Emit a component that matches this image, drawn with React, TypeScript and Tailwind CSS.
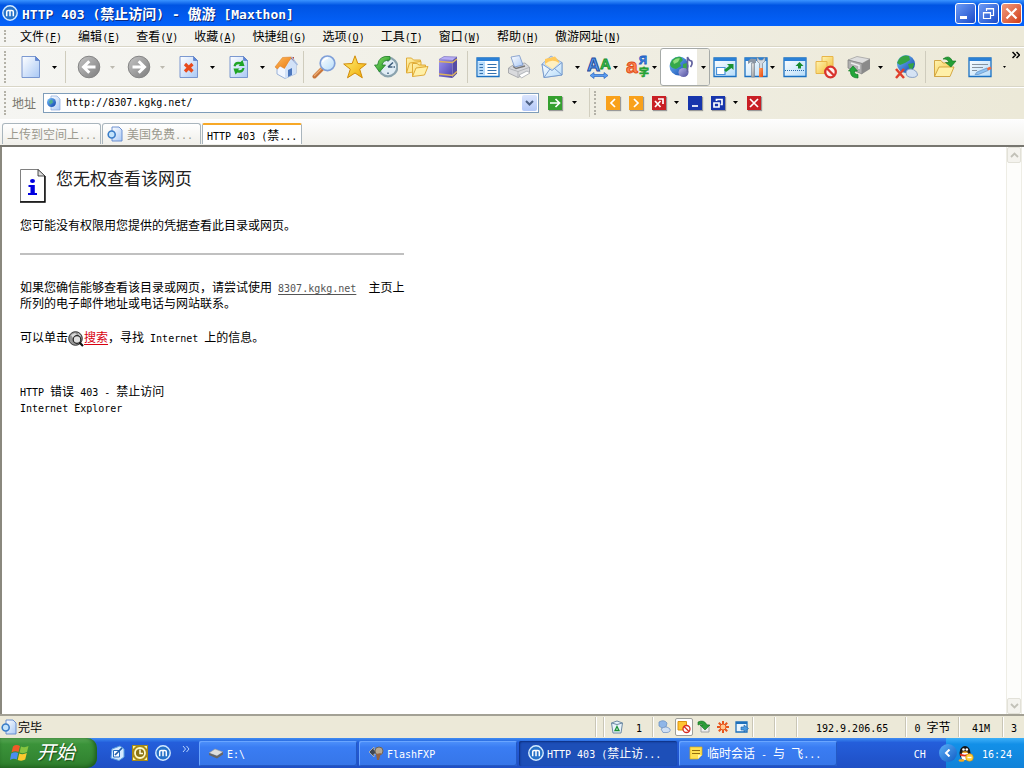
import type { ReactNode } from "react";

const cjk = "font-['Noto_Sans_CJK_SC',sans-serif]";
const mono = "font-['DejaVu_Sans_Mono','Noto_Sans_CJK_SC',monospace]";

// Half-width runs get the monospace face so they take half a CJK cell each
function Mixed({ text, latin = "text-[10px]" }: { text: string; latin?: string }) {
  const parts = text.split(/([\x20-\x7e]+)/).filter(Boolean);
  return (
    <span className="whitespace-pre">
      {parts.map((p, i) =>
        /^[\x20-\x7e]/.test(p) ? (
          <span key={i} className={`leading-none ${mono} ${latin}`}>{p}</span>
        ) : (
          <span key={i}>{p}</span>
        )
      )}
    </span>
  );
}

function Svg({ children, className = "size-6", box = "0 0 24 24" }: { children: ReactNode; className?: string; box?: string }) {
  return (
    <svg viewBox={box} className={`${className} shrink-0`} fill="none" aria-hidden="true">
      {children}
    </svg>
  );
}

function Gradients() {
  const list = [
    ["gPage", "#ffffff", "#a9c8f5"],
    ["gGray", "#c4c4c4", "#7d7d7d"],
    ["gStar", "#fff27a", "#f0a800"],
    ["gFolder", "#fff3b0", "#f3c344"],
    ["gGlobe", "#7cc4ff", "#0b3fa8"],
    ["gGreen", "#8be06a", "#118a1c"],
    ["gBook", "#9d92ee", "#4a41ab"],
    ["gWin", "#ffffff", "#b5dcfa"],
    ["gRoof", "#ffb95a", "#e97a12"],
    ["gMetal", "#f4f4f4", "#8d8d8d"],
    ["gOrange", "#ffa060", "#e8480e"],
    ["gNote", "#b4b4e8", "#4c4c9c"],
  ];
  return (
    <svg className="absolute size-0" aria-hidden="true">
      <defs>
        {list.map(([id, a, b]) => (
          <linearGradient key={id} id={id} x1="0" y1="0" x2="1" y2="1">
            <stop offset="0" stopColor={a} />
            <stop offset="1" stopColor={b} />
          </linearGradient>
        ))}
      </defs>
    </svg>
  );
}

const Maxthon = ({ className = "size-4" }: { className?: string }) => (
  <Svg className={className} box="0 0 16 16">
    <circle cx="8" cy="8" r="7.2" fill="#2672c8" stroke="#d4ebff" strokeWidth="1.4" />
    <path d="M4.700 11.200V6.800Q4.700 5.400 6.100 5.400H9.900Q11.300 5.400 11.300 6.800V11.200M8 5.400V11.200" stroke="#fff" strokeWidth="1.500" />
  </Svg>
);

const Sheet = () => (
  <path d="M3 1.500H16.500L20.500 5.500V22.500H3Z" fill="url(#gPage)" stroke="#6d8dcc" strokeWidth=".9" />
);
const Fold = () => <path d="M16.500 1.500V5.500H20.500Z" fill="#5e86d8" stroke="#5d7fc4" strokeWidth=".7" />;

const NewPage = () => <Svg><Sheet /><Fold /></Svg>;
const Back = () => (
  <Svg>
    <circle cx="12" cy="12" r="10.800" fill="url(#gGray)" stroke="#858585" />
    <path d="M18.500 12H7M12.300 6.200L6.500 12L12.300 17.800" stroke="#fff" strokeWidth="3" />
  </Svg>
);
const Forward = () => (
  <Svg>
    <circle cx="12" cy="12" r="10.800" fill="url(#gGray)" stroke="#858585" />
    <path d="M5.500 12H17M11.700 6.200L17.500 12L11.700 17.800" stroke="#fff" strokeWidth="3" />
  </Svg>
);
const Stop = () => (
  <Svg><Sheet /><Fold /><path d="M8 9L15.500 16.500M15.500 9L8 16.500" stroke="#e84a1c" strokeWidth="3.200" /></Svg>
);
const Refresh = () => (
  <Svg>
    <Sheet /><Fold />
    <path d="M6.500 11Q7.500 5.500 13.500 7L15.500 5L17.500 11L11.500 11L13 9.500Q9.500 8.500 8.500 11.500ZM17.500 13Q16.500 19 10.500 17.500L8.500 19.500L6.500 13.500L12.500 13.500L11 15Q14.500 16 15.500 13Z" fill="#1fa526" />
  </Svg>
);
const Home = () => (
  <Svg>
    <path d="M17 2H20V9H17Z" fill="#c7482e" />
    <path d="M3 12V19L11 23.500L22 18.500V9L17 4Z" fill="#f2f7ff" stroke="#9ab2d8" />
    <path d="M11 14V23.500L22 18.500V9L17 4Z" fill="#d2e2f8" />
    <path d="M1 12L8.500 2.500L17.500 2L10.500 13.500L6 11L3.500 14Z" fill="url(#gRoof)" stroke="#d9771c" strokeWidth=".5" />
    <path d="M17.500 2L23.500 10" stroke="#a5bbe0" strokeWidth="1.400" />
    <path d="M14 15L18 13V20L14 22Z" fill="#4d78bd" />
  </Svg>
);
const Search = () => (
  <Svg>
    <path d="M10 14L2.500 21.500" stroke="#c8763b" strokeWidth="4" strokeLinecap="round" />
    <path d="M10 13L2.500 20.500" stroke="#efae72" strokeWidth="1.300" strokeLinecap="round" />
    <circle cx="15.500" cy="8.300" r="7.300" fill="url(#gWin)" stroke="#7f9fd8" strokeWidth="1.700" />
    <path d="M10.500 7Q12 3.500 16 3.300" stroke="#fff" strokeWidth="1.600" />
  </Svg>
);
const Star = () => (
  <Svg>
    <path d="M12 .800L14.800 8.500L23.300 9L16.700 14.200L19.300 22.800L12 18L4.500 22.800L7.300 14.200L.700 9L9.200 8.500Z" fill="url(#gStar)" stroke="#d18b09" />
  </Svg>
);
const History = () => (
  <Svg>
    <circle cx="14" cy="12" r="9.300" fill="#e0ecf4" stroke="#8ba3ae" strokeWidth="2.200" />
    <path d="M14 12L19 7.500M14 12H18.500M14 5V6.500M21 12H19.500M14 19V17.500" stroke="#3c5c7a" strokeWidth="1.500" />
    <path d="M16 1.500Q5 0 3.500 10H.500L5.500 17L11.500 10H8Q9 5 16 5Z" fill="url(#gGreen)" stroke="#227e2b" strokeWidth=".8" />
  </Svg>
);
const Folders = () => (
  <Svg>
    <path d="M1.500 17.500V3H6.500L8.500 5H15.500V10" fill="url(#gFolder)" stroke="#dca52c" strokeWidth=".9" />
    <path d="M1.500 18L4.500 8L16 6.500V16Z" fill="#ffe995" stroke="#dca52c" strokeWidth=".9" />
    <path d="M7.500 21.500V8.500H12L14 10H20.500V13" fill="url(#gFolder)" stroke="#dca52c" strokeWidth=".9" />
    <path d="M7.500 21.500L11 13L23 11.500L19.500 20Z" fill="#fff0a8" stroke="#dca52c" strokeWidth=".9" />
  </Svg>
);
const Book = () => (
  <Svg>
    <path d="M3 4.500L8 1.500L21 2L16.500 5.500Z" fill="#b7adf4" stroke="#7068b8" strokeWidth=".6" />
    <path d="M3 4.500L16.500 5.500V23L3 21.500Z" fill="url(#gBook)" />
    <path d="M16.500 5.500L21 2V18.500L16.500 23Z" fill="#544ba4" />
    <path d="M3 6.500L16.500 7.500L21 4M3 19L16.500 20.500L21 16.500" stroke="#ddb35c" strokeWidth="1.500" />
  </Svg>
);
const SidePanel = () => (
  <Svg>
    <path d="M1 3H23V21.500H1Z" fill="#fff" stroke="#1a70c2" strokeWidth="1.300" />
    <path d="M1 3H23V6H1Z" fill="#2a80d6" />
    <path d="M2 6.500H9V21H2Z" fill="#b9dcfa" />
    <path d="M3.500 9.500H7M3.500 12.500H7M3.500 15.500H7M3.500 18.500H7M11.500 9.500H20.500M11.500 12.500H20.500M11.500 15.500H20.500M11.500 18.500H20.500" stroke="#3471ae" strokeWidth="1.200" />
  </Svg>
);
const Printer = () => (
  <Svg>
    <path d="M1.500 13L7 9.500L18 8L22.500 12V17L11 22.500L1.500 18Z" fill="#d9dadd" stroke="#9b9da2" strokeWidth=".8" />
    <path d="M4 2L12.500 .500L16 10L7.500 12Z" fill="url(#gPage)" stroke="#7593c8" strokeWidth=".8" />
    <path d="M2 13.500L11 16.500L22 12.500M11 16.500V22.500" stroke="#aaacb0" strokeWidth=".8" />
    <path d="M6 11.500L9 13.500L18 11" stroke="#777" strokeWidth="1.300" />
    <path d="M12 20L20 16L23 18L14.500 23Z" fill="#fff" stroke="#9a9da5" strokeWidth=".7" />
  </Svg>
);
const Mail = () => (
  <Svg>
    <path d="M2 9L11 1L22 7.500V20L4 22.500Z" fill="#c5def8" stroke="#84a4d2" strokeWidth=".8" />
    <path d="M5 4L15 1.500L19.500 7L12.500 14L5 9.500Z" fill="#ffc95c" />
    <path d="M5 9Q12 3 19 8L12.500 14Z" fill="#fff0c0" />
    <path d="M2 9L12 15.500L22 7.500V20L4 22.500Z" fill="url(#gWin)" stroke="#7396ca" strokeWidth=".9" />
    <path d="M4 22.500L10 14M22 20L14.500 13.500" stroke="#7396ca" strokeWidth=".9" />
  </Svg>
);
const FontSize = () => (
  <Svg>
    <text x="13" y="14" fontSize="15" fontWeight="700" fontFamily="Liberation Sans, sans-serif" fill="#3cc048" stroke="#168a34" strokeWidth=".8">A</text>
    <text x="0" y="16" fontSize="18" fontWeight="700" fontFamily="Liberation Sans, sans-serif" fill="#5a9cf0" stroke="#1c4c9c" strokeWidth="1">A</text>
    <path d="M3 20.500L7 17.500V19.500H17V17.500L21 20.500L17 23.500V21.500H7V23.500Z" fill="#5a9cf0" stroke="#2a66c0" strokeWidth=".7" />
  </Svg>
);
const Encoding = () => (
  <Svg>
    <text x="13" y="9" fontSize="11" fontWeight="700" fontFamily="Liberation Sans, sans-serif" fill="#4a94f0" stroke="#1c5cc0" strokeWidth=".8">Я</text>
    <text x="0" y="18" fontSize="21" fontWeight="700" fontFamily="Liberation Sans, sans-serif" fill="#ff8454" stroke="#e04c14" strokeWidth=".9">a</text>
    <text x="13" y="21" fontSize="10" fontWeight="700" fontFamily="Noto Sans CJK SC, sans-serif" fill="#2cac3c" stroke="#1d9a2c" strokeWidth=".6">字</text>
  </Svg>
);
const GlobeNote = () => (
  <Svg>
    <circle cx="10" cy="11" r="9.500" fill="url(#gGlobe)" />
    <path d="M3 5Q7 1 12 2L14 5L11 8L12 11L7 14Q1 13 1 9Z" fill="#35a84a" />
    <path d="M4 6Q7 2.500 11 3.500L9 7L5 9Z" fill="#8ede7e" />
    <path d="M14 9L18 8V14L14 15Z" fill="#3ca94a" />
    <ellipse cx="14.500" cy="17.500" rx="5" ry="4.500" fill="url(#gNote)" />
    <path d="M18.500 17V2Q20 6 22.500 6Q24 9 21.500 12" stroke="#62629f" strokeWidth="1.700" />
  </Svg>
);
const WinBase = () => (
  <>
    <path d="M1 3H23V21.500H1Z" fill="url(#gWin)" stroke="#1a70c2" strokeWidth="1.300" />
    <path d="M1 3H23V6H1Z" fill="#2a80d6" />
  </>
);
const FullScreen = () => (
  <Svg>
    <WinBase />
    <path d="M3.500 12.500H12V19.500H3.500Z" fill="#fff" stroke="#4a92d8" strokeWidth="1.200" />
    <path d="M11 15L16 11L14 9H20.500V15L18.500 13L13 17Z" fill="#189234" />
  </Svg>
);
const Tools = () => (
  <Svg>
    <WinBase />
    <path d="M4 6L7 3.500L12 4V8H9L7 7L4 9Z" fill="#8a96a5" />
    <path d="M7.500 8H10.500V22H7.500Z" fill="url(#gMetal)" stroke="#7c8794" strokeWidth=".7" />
    <path d="M13 2V6L15.500 8.500V14H18.500V8.500L21 6V2L18.500 5H15.500Z" fill="#d5dae1" stroke="#7c8794" strokeWidth=".7" />
    <path d="M15 13H19V22H15Z" fill="url(#gOrange)" />
  </Svg>
);
const PanelUp = () => (
  <Svg>
    <WinBase />
    <path d="M2 15.500H22" stroke="#2869a8" strokeDasharray="1 1" />
    <path d="M12.500 11L16.500 7L20.500 11H18V13.500H15V11Z" fill="#168a2d" />
  </Svg>
);
const AdBlock = () => (
  <Svg>
    <path d="M8 1.500H19V13H8Z" fill="url(#gFolder)" stroke="#e8b548" />
    <path d="M2 6.500H13V18.500H2Z" fill="url(#gFolder)" stroke="#e8b548" />
    <circle cx="16.500" cy="17" r="5.300" fill="#fff0ee" stroke="#d8342e" strokeWidth="2.300" />
    <path d="M13 13.500L20 20.500" stroke="#d8342e" strokeWidth="2.300" />
  </Svg>
);
const Drive = () => (
  <Svg>
    <path d="M1 5L10 1.500L23 4L15 8.500Z" fill="#dedede" stroke="#999" strokeWidth=".7" />
    <path d="M1 5L15 8.500V19L1 13Z" fill="#b0b0b0" stroke="#7c7c7c" strokeWidth=".7" />
    <path d="M15 8.500L23 4V14L15 19Z" fill="#8a8a8a" />
    <path d="M4 8L12 10.500V14" stroke="#ededed" strokeWidth="1.500" />
    <path d="M11 23Q3 23 3.500 16H1.500L6 11L10.500 16H7.500Q7 19.500 11 19.500Z" fill="#24a63a" stroke="#0f7a22" strokeWidth=".7" />
  </Svg>
);
const Offline = () => (
  <Svg>
    <circle cx="12" cy="9" r="9" fill="url(#gGlobe)" />
    <path d="M5 4Q9 -1 15 1L16 5L11 8L6 10L3 8ZM14 9L20 8Q20 13 16 16Z" fill="#35a344" />
    <path d="M2 14L10 23M10 14L2 23" stroke="#e0402c" strokeWidth="2.500" />
    <path d="M12 18Q12 14 17 14Q23 15 23.500 20Q22 23.500 15 22Q12 21 12 18Z" fill="#d5e3f4" stroke="#7f9ac2" strokeWidth=".9" />
  </Svg>
);
const OpenFolder = () => (
  <Svg>
    <path d="M1.500 21.500V5.500H8L10 8H17V12" fill="url(#gFolder)" stroke="#cf9f38" strokeWidth=".9" />
    <path d="M1.500 21.500L6 12H21L17 21.500Z" fill="#fff0a8" stroke="#cf9f38" strokeWidth=".9" />
    <path d="M10 4Q16 -1 19.500 6H23L18 12L12.500 7.500H16Q14.500 3.500 10 4Z" fill="#239f36" stroke="#11711e" strokeWidth=".6" />
  </Svg>
);
const EditPage = () => (
  <Svg>
    <WinBase />
    <path d="M4 9.500H20M4 12.500H15M4 15.500H9" stroke="#7a8794" strokeWidth=".9" />
    <path d="M9 17L19 13L20 15.500L10.500 19.500L7 19.500Z" fill="#8cc1f2" stroke="#5b86b8" strokeWidth=".6" />
    <path d="M19 13L22.500 11.500L23.500 14L20 15.500Z" fill="#ef6a3e" />
  </Svg>
);
const IePage = () => (
  <Svg className="size-4" box="0 0 16 16">
    <path d="M5 1H12L15 4V15H5Z" fill="url(#gPage)" stroke="#5f86cc" strokeWidth=".9" />
    <circle cx="4.700" cy="8.500" r="3.500" fill="#c4e4fc" stroke="#3a7cc8" strokeWidth="1.600" />
  </Svg>
);

function Caret({ faded = false }: { faded?: boolean }) {
  return (
    <Svg className="h-[3px] w-[5px]" box="0 0 5 3">
      <path d="M0 0H5L2.500 3Z" fill={faded ? "#bdbab0" : "#000"} />
    </Svg>
  );
}

function Tool({ label, icon, width = "w-6", drop, faded }: { label: string; icon: ReactNode; width?: string; drop?: string; faded?: boolean }) {
  return (
    <div className="flex h-8 shrink-0 items-center">
      <button aria-label={label} title={label} className={`flex h-full items-center justify-center ${width}`}>{icon}</button>
      {drop && (
        <button aria-label={`${label} ▾`} className={`flex h-full items-center justify-center ${drop}`}>
          <Caret faded={faded} />
        </button>
      )}
    </div>
  );
}

function Grip({ height }: { height: string }) {
  return <div className={`mx-1 w-0 shrink-0 border-l-2 border-dotted border-[#b4b2a8] ${height}`} />;
}
const Rule = () => <div className="mx-1 h-8 w-px shrink-0 bg-[#cfccbd]" />;

const menus: [string, string][] = [
  ["文件", "F"], ["编辑", "E"], ["查看", "V"], ["收藏", "A"], ["快捷组", "G"],
  ["选项", "O"], ["工具", "T"], ["窗口", "W"], ["帮助", "H"], ["傲游网址", "N"],
];

function TitleBar() {
  const base = "flex size-[21px] items-center justify-center rounded-[3px] border border-white";
  return (
    <header className="flex h-[26px] shrink-0 items-center bg-linear-to-b from-[#3a93ff] via-[#0054e3] via-20% to-[#0462fb] pr-0.5 pl-0.5">
      <Maxthon />
      <h1 className="ml-1 flex-1 text-[14px] leading-[18px] font-bold text-white [text-shadow:1px_1px_0_#0a2a80]">
        <Mixed text="HTTP 403 (禁止访问) - 傲游 [Maxthon]" latin="text-[13px]" />
      </h1>
      <div className="flex gap-0.5">
        <button aria-label="最小化" className={`${base} bg-linear-to-br from-[#6d9bf5] to-[#1b49c8]`}>
          <Svg className="size-[19px]" box="0 0 19 19"><path d="M4 12H11V15H4Z" fill="#fff" /></Svg>
        </button>
        <button aria-label="还原" className={`${base} bg-linear-to-br from-[#6d9bf5] to-[#1b49c8]`}>
          <Svg className="size-[19px]" box="0 0 19 19">
            <path d="M7.500 7V4.500H14.500V11.500H12M7 5H15M4.500 8.500H11.500V14.500H4.500ZM4 9H12" stroke="#fff" strokeWidth="1.200" />
          </Svg>
        </button>
        <button aria-label="关闭" className={`${base} bg-linear-to-br from-[#f09a7c] to-[#d03a10]`}>
          <Svg className="size-[19px]" box="0 0 19 19"><path d="M4.500 4.500L14.500 14.500M14.500 4.500L4.500 14.500" stroke="#fff" strokeWidth="2.200" /></Svg>
        </button>
      </div>
    </header>
  );
}

function MenuBar() {
  return (
    <nav className="flex h-[21px] shrink-0 items-center border-b border-[#d9d6c7]">
      <Grip height="h-3" />
      <div className="flex pl-0.5">
        {menus.map(([name, key]) => (
          <button key={key} className="shrink-0 px-2 text-[12px] leading-4">
            {name}
            <span className={`leading-none ${mono} text-[10px]`}>(<u>{key}</u>)</span>
          </button>
        ))}
      </div>
    </nav>
  );
}

function MainToolbar() {
  const wide = "w-[31px]";
  return (
    <div className="flex h-10 shrink-0 items-center overflow-hidden border-t border-b border-t-white border-b-[#d9d6c7]">
      <Grip height="h-8" />
      <div className="flex pl-[5px]">
        <Tool label="新建" icon={<NewPage />} width="w-8" drop="w-[14px]" />
      </div>
      <Rule />
      <div className="flex gap-1 pl-[3px]">
        <Tool label="后退" icon={<Back />} width="w-8" drop="w-[14px]" faded />
        <Tool label="前进" icon={<Forward />} width="w-8" drop="w-[14px]" faded />
        <Tool label="停止" icon={<Stop />} width="w-8" drop="w-[14px]" />
        <Tool label="刷新" icon={<Refresh />} width="w-8" drop="w-[14px]" />
        <Tool label="主页" icon={<Home />} width="w-[26px]" />
      </div>
      <Rule />
      <Tool label="搜索" icon={<Search />} width={wide} />
      <Tool label="收藏" icon={<Star />} width={wide} />
      <Tool label="历史" icon={<History />} width={wide} />
      <Tool label="文件夹" icon={<Folders />} width={wide} />
      <Tool label="资源" icon={<Book />} width={wide} />
      <Rule />
      <Tool label="侧边栏" icon={<SidePanel />} width={wide} />
      <Tool label="打印" icon={<Printer />} width={wide} />
      <Tool label="邮件" icon={<Mail />} width="w-9" drop="w-[14px]" />
      <div className="flex gap-[7px] pr-0.5 pl-[3px]">
        <Tool label="字体大小" icon={<FontSize />} drop="w-2" />
        <Tool label="编码" icon={<Encoding />} drop="w-2" />
      </div>
      <div className="flex h-[38px] w-[50px] shrink-0 overflow-hidden rounded-[3px] border border-[#a6aaa8] bg-white">
        <button aria-label="多媒体" className="flex flex-1 items-center justify-center pl-1"><GlobeNote /></button>
        <button aria-label="多媒体 ▾" className="flex w-3 items-center justify-center bg-[#eceadf]"><Caret /></button>
      </div>
      <div className="flex items-center gap-[7px] pl-[3px]">
        <Tool label="全屏" icon={<FullScreen />} />
        <Tool label="工具" icon={<Tools />} drop="w-2" />
        <Tool label="收起" icon={<PanelUp />} />
        <Tool label="过滤" icon={<AdBlock />} />
        <Tool label="代理" icon={<Drive />} width="w-7" drop="w-[14px]" />
        <Tool label="脱机" icon={<Offline />} />
        <div className="h-8 w-px bg-[#cfccbd]" />
        <Tool label="打开" icon={<OpenFolder />} />
        <Tool label="编辑" icon={<EditPage />} width="w-8" />
        <button aria-label="编辑 ▾">
          <Svg className="h-0.5 w-[3px]" box="0 0 3 2"><path d="M0 0H3L1.500 2Z" fill="#000" /></Svg>
        </button>
      </div>
      <button aria-label="更多" className="mr-1 ml-auto self-start pt-[3px]">
        <Svg className="h-2 w-2" box="0 0 8 8"><path d="M.500 1L3.500 4L.500 7M4.500 1L7.500 4L4.500 7" stroke="#000" strokeWidth="1.500" /></Svg>
      </button>
    </div>
  );
}

function Square({ label, color, d }: { label: string; color: string; d: string }) {
  return (
    <button aria-label={label} className={`flex size-[14px] shrink-0 items-center justify-center shadow-[1px_1px_1px_#999] ${color}`}>
      <Svg className="size-[14px]" box="0 0 14 14"><path d={d} stroke="#fff" strokeWidth="1.700" /></Svg>
    </button>
  );
}

function AddressBar() {
  return (
    <div className="flex h-8 shrink-0 items-center border-t border-white pb-0.5">
      <form className="flex h-full w-[590px] items-center border-r border-[#d2cfc0]" onSubmit={(e) => e.preventDefault()}>
        <Grip height="h-6" />
        <label htmlFor="url" className="ml-0.5 text-[12px] leading-4 text-[#77756b]">地址</label>
        <div className="ml-[7px] flex h-5 flex-1 items-center border border-[#7f9db9] bg-white">
          <div className="ml-0.5">
            <Svg className="size-4" box="0 0 16 16">
              <path d="M5 1H11L14 4V15H5Z" fill="url(#gPage)" stroke="#88a7dd" strokeWidth=".7" />
              <circle cx="5.500" cy="7.500" r="4.500" fill="url(#gGlobe)" />
              <path d="M3 6L6 4.500L7 7.500L4 9.500Z" fill="#4fae8e" />
            </Svg>
          </div>
          <input id="url" type="text" defaultValue="http://8307.kgkg.net/" className={`ml-1 h-4 min-w-0 flex-1 text-[10px] outline-none ${mono}`} />
          <button type="button" aria-label="历史地址" className="mr-px flex h-4 w-[15px] items-center justify-center rounded-[2px] bg-linear-to-b from-[#dbe5fd] to-[#b3c8f8]">
            <Svg className="h-[6px] w-[9px]" box="0 0 9 6"><path d="M1 1L4.500 4.500L8 1" stroke="#4d6185" strokeWidth="2" /></Svg>
          </button>
        </div>
        <div className="mr-3 ml-[9px] flex items-center gap-[10px]">
          <Square label="转到" color="bg-[#35a02f]" d="M2 7H11M7.500 3L11.500 7L7.500 11" />
          <Caret />
        </div>
      </form>
      <Grip height="h-6" />
      <div className="flex items-center gap-[9px] pl-1.5">
        <Square label="上一个" color="bg-[#f9a11b]" d="M9 3L5 7L9 11" />
        <Square label="下一个" color="bg-[#f9a11b]" d="M5 3L9 7L5 11" />
        <div className="flex items-center gap-2">
          <Square label="关闭全部" color="bg-[#c91f25]" d="M3 5L8.500 11M8.500 5L3 11M6 3H11V8" />
          <Caret />
        </div>
        <Square label="最小化" color="bg-[#1735ac]" d="M4 10H10" />
        <div className="flex items-center gap-2">
          <Square label="还原" color="bg-[#1735ac]" d="M5.500 5V3.500H11V8.500H9.500M3 7H8V11H3Z" />
          <Caret />
        </div>
        <Square label="关闭" color="bg-[#c91f25]" d="M3 3L11 11M11 3L3 11" />
      </div>
    </div>
  );
}

function TabBar() {
  const idle = "flex h-[21px] w-[99px] items-center rounded-t-[3px] border border-b-0 border-[#a9b5bd] bg-linear-to-b from-white to-[#f0efea] pl-1 text-[12px] leading-4 text-[#9b998e]";
  return (
    <div className="flex h-7 shrink-0 items-start gap-px border-t border-b-2 border-t-white border-b-[#77766f] bg-linear-to-b from-[#fdfdfd] to-[#f1f0eb] pt-[3px] pl-0.5">
      <button className={idle}><Mixed text="上传到空间上..." /></button>
      <button className={idle}>
        <IePage />
        <span className="ml-1"><Mixed text="美国免费..." /></span>
      </button>
      <button className="flex h-[21px] w-[100px] items-center rounded-t-[2px] border border-t-2 border-b-0 border-[#a9b5bd] border-t-[#f7a826] bg-white pl-1 text-[12px] leading-4">
        <Mixed text="HTTP 403 (禁..." />
      </button>
    </div>
  );
}

function ErrorPage() {
  return (
    <main className="flex min-h-0 flex-1 border-l-2 border-[#8a887e] bg-white">
      <article className="flex-1 pt-[19px] pl-[18px] text-[12px] leading-4">
        <div className="flex items-start">
          <Svg className="mt-[3px] h-[34px] w-[26px]" box="0 0 26 34">
            <path d="M.500 .500H18L24.500 7V32.500H.500Z" fill="#fff" stroke="#808080" />
            <path d="M0 33H25V7" stroke="#000" strokeWidth="1.400" />
            <path d="M18 .500V7H25Z" fill="#ddd" stroke="#222" strokeWidth=".8" />
            <ellipse cx="12.500" cy="12" rx="2.500" ry="2" fill="#0000e0" />
            <path d="M8.500 16H14.800V24H17V26H8V24H10.500V18H8.500Z" fill="#0000e0" />
          </Svg>
          <h2 className="ml-[10px] text-[17px] leading-6 font-normal text-[#222]">您无权查看该网页</h2>
        </div>
        <p className="mt-[14px]">您可能没有权限用您提供的凭据查看此目录或网页。</p>
        <hr className="mt-5 w-96 border-t-2 border-[#c0c0c0]" />
        <p className="mt-6">
          <Mixed text="如果您确信能够查看该目录或网页，请尝试使用 " />
          <a href="#home" className="text-[#555] underline underline-offset-2"><Mixed text="8307.kgkg.net" /></a>
          <Mixed text="  主页上" />
          <br />
          所列的电子邮件地址或电话与网站联系。
        </p>
        <p className="mt-[18px] flex h-4 items-center">
          可以单击
          <Svg className="mt-1 size-4" box="0 0 16 16">
            <circle cx="7.500" cy="7.500" r="6.800" fill="#969696" stroke="#333" />
            <path d="M3 4L7 2L9 4L5 7ZM10 2L13 5L11 6Z" fill="#ddd" />
            <circle cx="9" cy="8.500" r="3.800" fill="#e1e1e1" stroke="#222" strokeWidth="1.200" />
            <path d="M11.500 11.500L15 15" stroke="#111" strokeWidth="2.200" />
          </Svg>
          <a href="#search" className="text-[#d80010] underline underline-offset-2">搜索</a>
          <Mixed text="，寻找 Internet 上的信息。" />
        </p>
        <p className="mt-[38px]">
          <Mixed text="HTTP 错误 403 - 禁止访问" />
          <br />
          <Mixed text="Internet Explorer" />
        </p>
      </article>
      <div className="mr-0.5 flex w-4 flex-col justify-between border-x border-[#eeede5] bg-[#fdfdfb]">
        <ScrollButton label="向上滚动" d="M1 5L4.500 1.500L8 5" />
        <ScrollButton label="向下滚动" d="M1 1L4.500 4.500L8 1" />
      </div>
    </main>
  );
}

function ScrollButton({ label, d }: { label: string; d: string }) {
  return (
    <button aria-label={label} className="flex h-4 w-full items-center justify-center rounded-[2px] border border-[#e2e1d8] bg-[#f4f3ee]">
      <Svg className="h-[6px] w-[9px]" box="0 0 9 6"><path d={d} stroke="#c2c1b8" strokeWidth="1.800" /></Svg>
    </button>
  );
}

const Divider = () => <div className="h-5 w-0.5 border-r border-l border-r-white border-l-[#c9c6b6]" />;

function StatusBar() {
  return (
    <footer className="flex h-6 shrink-0 items-center border-t-2 border-[#a3a195] bg-[#ece9d8] text-[12px] leading-4">
      <div className="ml-px"><IePage /></div>
      <span className="ml-px flex-1">完毕</span>
      <Divider />
      <div className="w-1.5" />
      <Divider />
      <div className="flex w-[47px] items-center gap-3 pl-[5px]">
        <Svg className="size-[14px]" box="0 0 14 14">
          <path d="M1.500 3L7 1L12.500 3L11 13H3Z" fill="#e8f3fb" stroke="#6e8aa4" />
          <path d="M1.500 3L7 4.500L12.500 3" stroke="#6e8aa4" />
          <path d="M7 6.500L9 10.500H5Z" stroke="#1b9236" strokeWidth="1.300" />
        </Svg>
        <Mixed text="1" />
      </div>
      <Divider />
      <div className="flex w-[98px] items-center gap-[3px] pl-0.5">
        <Svg className="size-4" box="0 0 16 16">
          <path d="M3 3Q8 0 11 4L10 8L6 9L3 7Z" fill="#8fb6e8" stroke="#6b92c4" strokeWidth=".8" />
          <path d="M5 10Q10 6 14 10Q15 13 11 13.500H7Z" fill="#cfe0f5" stroke="#7596c4" strokeWidth=".8" />
        </Svg>
        <button aria-label="过滤" className="flex h-[18px] w-[18px] items-center justify-center rounded-[2px] border border-[#9d9f99] bg-white">
          <Svg className="size-[14px]" box="0 0 14 14">
            <path d="M1 1.500H9.500V10H1Z" fill="#ffc431" stroke="#dc9310" />
            <circle cx="9.500" cy="9" r="3.500" fill="#fff" stroke="#d72d22" strokeWidth="1.300" />
            <path d="M7 6.500L12 11.500" stroke="#d72d22" strokeWidth="1.300" />
          </Svg>
        </button>
        <Svg className="size-4" box="0 0 16 16">
          <path d="M5 6H13V13H5Z" fill="#eee" stroke="#a2a2a2" />
          <path d="M2 3Q8 0 11 6H14L9 11L4 6H7Q6 4 2 6Z" fill="#2b9c38" stroke="#14701f" strokeWidth=".6" />
        </Svg>
        <Svg className="size-4" box="0 0 16 16">
          <path d="M8 2V14M2 8H14M3.800 3.800L12.200 12.200M12.200 3.800L3.800 12.200" stroke="#e8561c" strokeWidth="2" />
          <circle cx="8" cy="8" r="3" fill="#ffc890" stroke="#e8561c" />
        </Svg>
        <Svg className="size-4" box="0 0 16 16">
          <path d="M2 3H13V13H2Z" fill="#e8f5ff" stroke="#1d70bb" strokeWidth="1.300" />
          <path d="M2 3H13V5H2Z" fill="#1d70bb" />
          <path d="M7 8H10V6L14.500 9.500L10 13V11H7Z" fill="#4a9ae0" stroke="#1d5fa5" strokeWidth=".6" />
        </Svg>
      </div>
      <Divider />
      <div className="w-5" />
      <Divider />
      <div className="w-5" />
      <Divider />
      <div className="w-[107px] pl-[18px]"><Mixed text="192.9.206.65" /></div>
      <Divider />
      <div className="w-[51px] text-center"><Mixed text="0 字节" /></div>
      <Divider />
      <div className="w-[42px] text-center"><Mixed text="41M" /></div>
      <Divider />
      <div className="w-5 text-center"><Mixed text="3" /></div>
    </footer>
  );
}

function Task({ icon, text, active }: { icon: ReactNode; text: string; active?: boolean }) {
  return (
    <button
      className={`flex h-[25px] w-[158px] items-center gap-[3px] rounded-[2px] pl-[9px] text-left text-[12px] leading-4 text-white ${
        active ? "bg-[#1d4fb8] shadow-[inset_1px_1px_2px_#0c2f80]" : "bg-linear-to-b from-[#4f92fb] via-[#3a7df3] via-25% to-[#3675e8] shadow-[inset_1px_1px_0_#69a5ff,inset_-1px_-1px_0_#2459c4]"
      }`}
    >
      {icon}
      <Mixed text={text} />
    </button>
  );
}

function Taskbar() {
  return (
    <div className="flex h-[30px] shrink-0 items-center bg-linear-to-b from-[#3f8cf3] via-[#245edb] via-15% to-[#1f4fc4]">
      <button className="flex h-full w-[97px] items-center gap-[7px] rounded-r-[10px] bg-linear-to-b from-[#5bab58] via-[#3b933a] via-20% to-[#2f7f2d] pl-[10px] shadow-[inset_-2px_-1px_4px_#1c5a1b]">
        <Svg className="size-5" box="0 0 20 20">
          <path d="M3 3.500Q6 1 10 3L8.500 9Q5 7.500 1.500 9.500Z" fill="#f05a28" />
          <path d="M11 3.500Q14.500 5 18.500 3L17 9Q13.500 11 9.500 9.500Z" fill="#85c440" />
          <path d="M1.200 10.500Q5 8.500 8.200 10L6.800 16.500Q3.500 15 0 17Z" fill="#4a8df0" />
          <path d="M9.200 10.500Q13 12 16.800 10L15.200 16.500Q12 18.500 7.700 17Z" fill="#fbc92e" />
        </Svg>
        <span className="pb-1 text-[19px] leading-6 text-white italic [text-shadow:1px_1px_1px_#1c4d1b]">开始</span>
      </button>
      <div className="flex w-[102px] items-center gap-[7px] pl-3">
        <button aria-label="显示桌面">
          <Svg className="size-4" box="0 0 16 16">
            <path d="M3 4L11 1L15 4V12L10 15.500L2 13Z" fill="#d4e9ff" stroke="#5fa1df" />
            <path d="M4.500 5.500H10.500V12H4.500Z" fill="#fff" stroke="#246dbd" />
            <path d="M6 10L13 3" stroke="#1e5da8" strokeWidth="1.700" />
          </Svg>
        </button>
        <button aria-label="时钟">
          <Svg className="size-4" box="0 0 16 16">
            <path d="M0 0H16V16H0Z" fill="#a88a16" />
            <circle cx="8" cy="8" r="5" fill="#8c7414" stroke="#fffbc8" strokeWidth="1.800" />
            <path d="M8 4.500V8.500H11" stroke="#fffbe0" strokeWidth="1.500" />
            <path d="M1 1H4L1 4ZM15 1H12L15 4ZM1 15H4L1 12ZM15 15H12L15 12Z" fill="#fff49a" />
          </Svg>
        </button>
        <button aria-label="傲游"><Maxthon /></button>
        <button aria-label="更多快捷方式" className="mb-2 ml-1">
          <Svg className="size-2" box="0 0 8 8"><path d="M1 1L3.500 4L1 7M4.500 1L7 4L4.500 7" stroke="#b6d3ff" /></Svg>
        </button>
      </div>
      <div className="flex flex-1 gap-0.5">
        <Task
          text="E:\"
          icon={<Svg className="size-4" box="0 0 16 16"><path d="M1 8L7 4L15 7L9 11Z" fill="#ddd" stroke="#999" strokeWidth=".6" /><path d="M1 8L9 11V13.500L1 10ZM9 11L15 7V9.500L9 13.500Z" fill="#666" /></Svg>}
        />
        <Task
          text="FlashFXP"
          icon={<Svg className="size-4" box="0 0 16 16"><path d="M1 7L6 2V5H10V9H6V12Z" fill="#3e4753" stroke="#bbb" strokeWidth=".8" /><circle cx="11" cy="6" r="4" fill="#b8a890" stroke="#6d655a" /><path d="M8 9L13 8L11 15H9Z" fill="#916343" /></Svg>}
        />
        <Task text="HTTP 403 (禁止访..." icon={<Maxthon />} active />
        <Task
          text="临时会话 - 与 飞..."
          icon={<Svg className="size-4" box="0 0 16 16"><path d="M2 2H14V10L10 14H2Z" fill="#ffe052" stroke="#d9a918" strokeWidth=".7" /><path d="M4 5.500H12M4 8.500H12" stroke="#946d0c" /><path d="M10 14V10H14Z" fill="#fff5b0" /></Svg>}
        />
      </div>
      <span className="mr-5 text-[12px] leading-4 text-white"><Mixed text="CH" /></span>
      <div className="flex h-full items-center bg-linear-to-b from-[#3bb0f8] via-[#1290e8] via-20% to-[#1182d8] pr-3 text-[12px] leading-4 text-white">
        <button aria-label="显示隐藏的图标" className="-ml-[7px] flex size-[18px] items-center justify-center rounded-full bg-linear-to-br from-[#5cb0f8] to-[#0f5cc4]">
          <Svg className="size-2" box="0 0 8 8"><path d="M5.500 .500L2 4L5.500 7.500" stroke="#fff" strokeWidth="2" /></Svg>
        </button>
        <Svg className="size-[17px]" box="0 0 17 17">
          <ellipse cx="8" cy="8" rx="5.500" ry="7" fill="#151515" />
          <ellipse cx="8" cy="11" rx="3.800" ry="4" fill="#fff" />
          <path d="M3 8.500Q8 11 13.500 8L13 10.500Q8 12.500 3 10.500Z" fill="#de2d1c" />
          <circle cx="6.500" cy="4.500" r="1.300" fill="#fff" />
          <circle cx="9.800" cy="4.500" r="1.300" fill="#fff" />
          <path d="M4.500 7Q8 5.500 11.500 7Q8 9 4.500 7Z" fill="#f8a91a" />
          <ellipse cx="4.500" cy="15.500" rx="3" ry="1.300" fill="#f8a91a" />
          <circle cx="12.500" cy="12.500" r="3.800" fill="#ffcf35" stroke="#cc8a10" strokeWidth=".6" />
          <path d="M10.500 12.500H14.500" stroke="#fff" strokeWidth="1.400" />
        </Svg>
        <time className="ml-2"><Mixed text="16:24" /></time>
      </div>
    </div>
  );
}

export default function App() {
  return (
    <div className={`flex h-screen flex-col overflow-hidden bg-[#ece9d8] text-black ${cjk}`}>
      <Gradients />
      <TitleBar />
      <div className="shrink-0 bg-linear-to-r from-[#f5f5f2] to-[#ece9d8]">
        <MenuBar />
        <MainToolbar />
        <AddressBar />
      </div>
      <TabBar />
      <ErrorPage />
      <StatusBar />
      <Taskbar />
    </div>
  );
}
